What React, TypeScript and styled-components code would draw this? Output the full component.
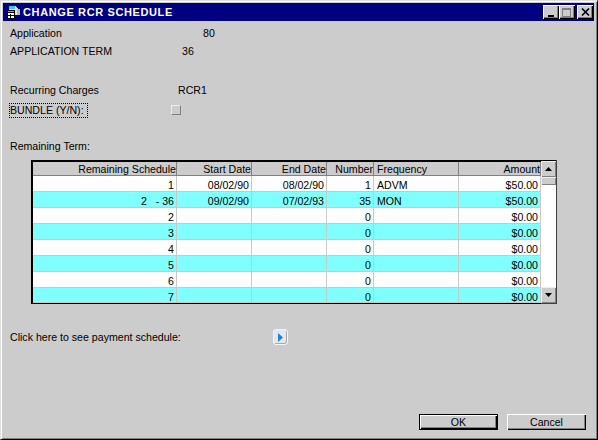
import React from "react";
import styled, { createGlobalStyle } from "styled-components";

const Global = createGlobalStyle`
  html, body { margin: 0; padding: 0; background: #cccccc; }
  body { width: 598px; height: 440px; overflow: hidden; font-family: "Liberation Sans", Arial, sans-serif; font-size: 10.6px; color: #000; }
  * { box-sizing: border-box; }
`;

const Window = styled.div`
  width: 598px; height: 440px; background: #cccccc; display: flex; flex-direction: column;
  padding: 2px 3px 2px 2px;
  border-style: solid; border-width: 1px;
  border-color: #dfdfdf #000 #000 #dfdfdf;
  box-shadow: inset 1px 1px 0 #fff, inset -1px -1px 0 #808080;
`;
const TitleBar = styled.div`
  height: 18px; flex: none; background: #000080; color: #fff; display: flex; align-items: center; padding: 0 1px 0 3px; gap: 2px;
  font-weight: 700; font-size: 11px; letter-spacing: 0.62px;
`;
const TitleText = styled.span` flex: 1; white-space: nowrap; margin-top: -1px; `;
const WinButtons = styled.div` display: flex; align-items: center; `;
const WinButton = styled.button<{ $gap?: number }>`
  width: 16px; height: 14px; padding: 0; margin: 0 0 0 ${p => p.$gap ?? 0}px; background: #cccccc; display: flex; align-items: center; justify-content: center;
  border: 0; box-shadow: inset 1px 1px 0 #fff, inset -1px -1px 0 #000, inset -2px -2px 0 #808080;
`;
const Body = styled.div` flex: 1; display: flex; flex-direction: column; padding: 0 0 0 7px; position: relative; `;
const InfoRow = styled.div<{ $h: number; $mt?: number }>`
  display: flex; align-items: center; height: ${p => p.$h}px; margin-top: ${p => p.$mt ?? 0}px; white-space: nowrap;
`;
const Label = styled.span<{ $w: number }>` width: ${p => p.$w}px; flex: none; `;
const FocusLabel = styled.span`
  outline: 1px dotted #000; outline-offset: 0; padding: 0; line-height: 13px; width: 77px; flex: none;
`;
const Check = styled.span`
  width: 10px; height: 10px; margin: 0 0 1px 84px; flex: none; background: #cccccc;
  border: 1px solid; border-color: #eeeeee #808080 #808080 #eeeeee;
`;
const GridWrap = styled.div`
  margin: 5px 0 0 21px; width: 526px; height: 144px; display: flex; border-top: 2px solid #000; border-left: 2px solid #000; flex: none;
`;
const Table = styled.div`
  width: 508px; display: grid; grid-template-columns: 144px 75px 75px 47px 85px 82px; grid-template-rows: 14px repeat(7, 16px) 15px; border-bottom: 1px solid #000;
`;
const Head = styled.div<{ $left?: boolean }>`
  background: #cccccc; text-align: ${p => (p.$left ? "left" : "right")}; line-height: 14px; padding: 0 1px 0 3px; overflow: hidden; white-space: nowrap;
  box-shadow: inset -1px 0 0 #808080, inset 0 -1px 0 #808080;
`;
const Cell = styled.div<{ $alt: boolean; $left?: boolean }>`
  background: ${p => (p.$alt ? "#80ffff" : "#ffffff")}; text-align: ${p => (p.$left ? "left" : "right")}; line-height: 18px; padding: 0 2px 0 3px; overflow: hidden; white-space: pre;
  border-right: 1px solid #c8c8c8; border-bottom: 1px solid #c8c8c8;
`;
const Scroll = styled.div`
  width: 16px; display: flex; flex-direction: column; background: #fff; margin-top: -2px; height: 144px; border-right: 1px solid #404040; border-bottom: 1px solid #404040; flex: none;
`;
const Arrow = styled.div`
  height: 16px; width: 15px; background: #cccccc; flex: none; display: flex; align-items: center; justify-content: center;
  box-shadow: inset 1px 1px 0 #eeeeee, inset -1px -1px 0 #808080;
`;
const ArrowUp = styled(Arrow)` border-top: 1px solid #000; height: 17px; `;
const Thumb = styled.div`
  height: 8px; width: 15px; background: #cccccc; flex: none; box-shadow: inset 1px 1px 0 #eeeeee, inset -1px -1px 0 #808080;
`;
const Track = styled.div` flex: 1; background: #fff; `;
const LinkRow = styled.div`
  display: flex; align-items: center; height: 18px; margin-top: 24px; white-space: nowrap;
`;
const GoButton = styled.button`
  width: 15px; height: 16px; margin-left: 92px; padding: 0; flex: none; border: 1px solid #f4f4f4; border-radius: 3px; background: #e4e8ee;
  display: flex; align-items: center; justify-content: center; box-shadow: inset -1px -1px 0 #a8a8a8;
`;
const Footer = styled.div`
  margin-top: auto; display: flex; justify-content: flex-end; gap: 9px; padding: 0 8px 7px 0;
`;
const Btn = styled.button<{ $def?: boolean }>`
  width: 79px; height: 16px; padding: 0; font: inherit; color: #000; background: #cccccc; line-height: 13px;
  border: ${p => (p.$def ? "1px solid #000" : "0")};
  box-shadow: inset 1px 1px 0 #fff, inset -1px -1px 0 #000, inset -2px -2px 0 #808080;
`;

const Tri = ({ up }: { up?: boolean }) => (
  <svg width="7" height="4" viewBox="0 0 7 4"><path d={up ? "M3.5 0L7 4H0z" : "M0 0h7L3.5 4z"} fill="#000" /></svg>
);

const AppIcon = () => (
  <svg width="15" height="14" viewBox="0 0 15 14" shapeRendering="crispEdges" style={{ flex: "none" }}>
    <path d="M3 1h6l3 2v7H3z" fill="#d8e4e4" />
    <path d="M3 1h6v3H3z" fill="#40c8d8" />
    <rect x="11" y="4" width="3" height="6" fill="#b8b8b8" />
    <rect x="1" y="5" width="8" height="9" fill="#000" />
    <rect x="2" y="6" width="6" height="1" fill="#40c8d8" />
    <rect x="2" y="8" width="6" height="5" fill="#fff" />
    <rect x="4" y="9" width="1" height="4" fill="#000" />
    <rect x="2" y="10" width="6" height="1" fill="#000" />
  </svg>
);

const headers: [string, boolean?][] = [
  ["Remaining Schedule"], ["Start Date"], ["End Date"], ["Number"], ["Frequency", true], ["Amount"],
];
const rows = [
  ["1", "08/02/90", "08/02/90", "1", "ADVM", "$50.00"],
  ["2   - 36", "09/02/90", "07/02/93", "35", "MON", "$50.00"],
  ["2", "", "", "0", "", "$0.00"],
  ["3", "", "", "0", "", "$0.00"],
  ["4", "", "", "0", "", "$0.00"],
  ["5", "", "", "0", "", "$0.00"],
  ["6", "", "", "0", "", "$0.00"],
  ["7", "", "", "0", "", "$0.00"],
];

export default function App() {
  return (
    <Window>
      <Global />
      <TitleBar>
        <AppIcon />
        <TitleText>CHANGE RCR SCHEDULE</TitleText>
        <WinButtons>
          <WinButton aria-label="Minimize">
            <svg width="8" height="9" viewBox="0 0 8 9" shapeRendering="crispEdges"><rect x="1" y="7" width="6" height="2" fill="#000" /></svg>
          </WinButton>
          <WinButton aria-label="Maximize">
            <svg width="10" height="9" viewBox="0 0 10 9" shapeRendering="crispEdges"><path d="M0 0h9v9H0z M1 2v6h7V2z" fill="#808080" fillRule="evenodd" /></svg>
          </WinButton>
          <WinButton $gap={2} aria-label="Close">
            <svg width="9" height="8" viewBox="0 0 9 8"><path d="M1 0.5L8 7.5M8 0.5L1 7.5" stroke="#000" strokeWidth="1.6" /></svg>
          </WinButton>
        </WinButtons>
      </TitleBar>
      <Body>
        <InfoRow $h={17} $mt={3}><Label $w={193}>Application</Label><span>80</span></InfoRow>
        <InfoRow $h={20}><Label $w={172}>APPLICATION TERM</Label><span>36</span></InfoRow>
        <InfoRow $h={18} $mt={20}><Label $w={168}>Recurring Charges</Label><span>RCR1</span></InfoRow>
        <InfoRow $h={18} $mt={2}><FocusLabel>BUNDLE (Y/N):</FocusLabel><Check /></InfoRow>
        <InfoRow $h={18} $mt={18}>Remaining Term:</InfoRow>
        <GridWrap>
          <Table>
            {headers.map(([h, left]) => <Head key={h} $left={left}>{h}</Head>)}
            {rows.flatMap((r, i) =>
              r.map((c, j) => <Cell key={`${i}-${j}`} $alt={i % 2 === 1} $left={j === 4}>{c}</Cell>)
            )}
          </Table>
          <Scroll>
            <ArrowUp><Tri up /></ArrowUp>
            <Thumb />
            <Track />
            <Arrow><Tri /></Arrow>
          </Scroll>
        </GridWrap>
        <LinkRow>
          <Label $w={171}>Click here to see payment schedule:</Label>
          <GoButton aria-label="Open">
            <svg width="5" height="9" viewBox="0 0 5 9"><path d="M0 0l5 4.5L0 9z" fill="#1a86d8" /></svg>
          </GoButton>
        </LinkRow>
        <Footer>
          <Btn $def>OK</Btn>
          <Btn>Cancel</Btn>
        </Footer>
      </Body>
    </Window>
  );
}
